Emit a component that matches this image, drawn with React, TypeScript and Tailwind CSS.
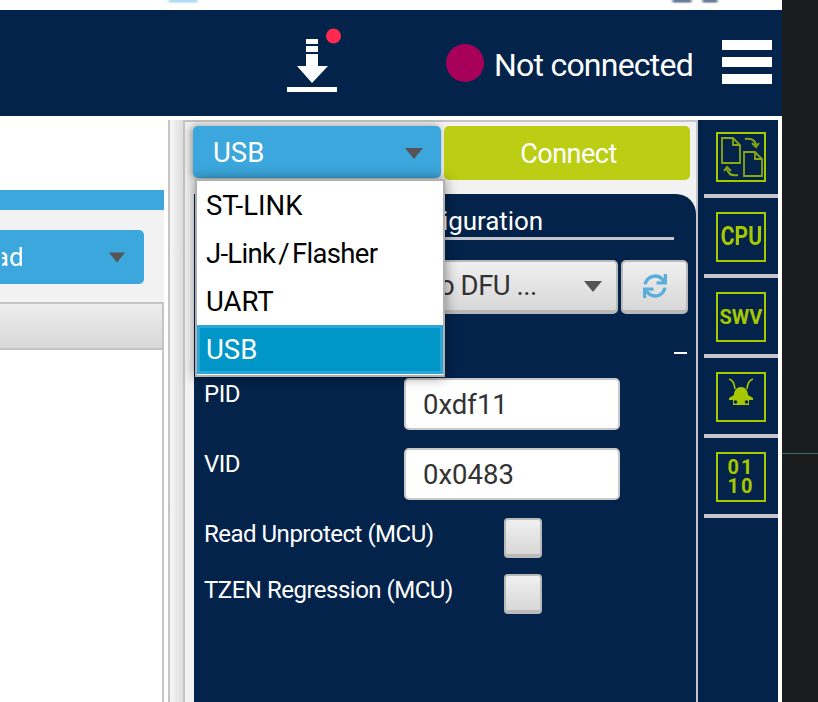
import { FaSync } from 'react-icons/fa'

const font = { fontFamily: 'Roboto, sans-serif' }

function Caret({ className }: { className: string }) {
  return (
    <svg viewBox="0 0 18 11" className={className}>
      <path d="M0 0h18L9 11z" fill="#555" />
    </svg>
  )
}

function IconBox({ children }: { children: React.ReactNode }) {
  return (
    <div className="mb-3 ml-[18px] flex h-[50px] w-[50px] items-center justify-center border-[2px] border-[#a6c800] text-[#a6c800]">
      {children}
    </div>
  )
}

function Separator() {
  return <div className="mb-[14px] ml-[6px] h-1 bg-[#c4c6cc]" />
}

function SideBar() {
  return (
    <div className="w-[82px] shrink-0 border-l-2 border-[#c4c6cc] bg-[#03234b] pt-3">
      <IconBox>
        <svg viewBox="0 0 46 46" className="h-[46px] w-[46px]" fill="none" stroke="#8aa810" strokeWidth="1.8">
          <path d="M4 4h11l7 7v18H4z" />
          <path d="M15 4v7h7" />
          <path d="M26 18h11l7 7v17H26z" />
          <path d="M37 18v7h7" />
          <path d="M27 5c6-1 10 1 11 6" strokeWidth="2" />
          <path d="M34 9l4 4 3-4" strokeWidth="2" />
          <path d="M20 41c-6 1-10-1-11-6" strokeWidth="2" />
          <path d="M13 37l-4-4-3 4" strokeWidth="2" />
        </svg>
      </IconBox>
      <Separator />
      <IconBox>
        <span className="scale-x-[0.85] text-[25px] font-bold" style={font}>CPU</span>
      </IconBox>
      <Separator />
      <IconBox>
        <span className="text-[20px] font-bold" style={font}>SWV</span>
      </IconBox>
      <Separator />
      <IconBox>
        <svg viewBox="0 0 46 46" className="h-[46px] w-[46px]" fill="none">
          <path d="M17 15c-.5-5-2-9-6-10M29 15c.5-5 2-9 6-10" stroke="#a6c800" strokeWidth="1.6" />
          <path d="M16 21c0-5 3-8 7-8s7 3 7 8l5 3v2h-4v5H15v-5h-4v-2z" fill="#a6c800" />
          <circle cx="17.5" cy="28" r="1.8" fill="#03234b" />
          <circle cx="28.5" cy="28" r="1.8" fill="#03234b" />
        </svg>
      </IconBox>
      <Separator />
      <IconBox>
        <span className="text-center text-[20px] leading-[19px] font-bold tracking-[2px]" style={font}>
          01
          <br />
          10
        </span>
      </IconBox>
      <Separator />
    </div>
  )
}

function PortMenu() {
  return (
    <div className="absolute top-[57px] left-[10px] z-10 w-[250px] border-2 border-[#b0b0b0] bg-white pb-[1px] text-[27.5px] text-black shadow-[0_0_12px_rgba(0,0,0,0.45)]">
      <div className="flex h-12 items-center pt-[2px] pl-[9px]">ST-LINK</div>
      <div className="flex h-12 items-center pt-[2px] pl-[9px] tracking-[-0.7px] [word-spacing:-3px]">J-Link / Flasher</div>
      <div className="flex h-12 items-center pt-[2px] pl-[9px]">UART</div>
      <div className="flex h-[49px] items-center border-[3px] border-[#2ba6d8] bg-[#0096c8] pl-[6px] text-white">USB</div>
    </div>
  )
}

function Field({ label, value }: { label: string; value: string }) {
  return (
    <div className="mb-[18px] flex h-[52px] pl-[10px]">
      <div className="w-[200px] pt-[1px] text-[24px] leading-[30px] tracking-[-0.5px] text-white">{label}</div>
      <div className="flex w-[216px] items-center rounded-[5px] border-2 border-[#c8c8c8] bg-white pt-[2px] pl-[17px] text-[27.5px] text-[#333]">
        {value}
      </div>
    </div>
  )
}

function Check({ label, className }: { label: string; className: string }) {
  return (
    <div className={`flex h-10 pl-[10px] ${className}`}>
      <div className="w-[300px] text-[24px] leading-[32px] tracking-[-0.5px] whitespace-nowrap text-white">{label}</div>
      <div className="h-10 w-[38px] rounded-[4px] border-2 border-b-[4px] border-[#b9b9b9] bg-gradient-to-b from-[#f0f0f0] to-[#d8d8d8]" />
    </div>
  )
}

function RightPanel() {
  return (
    <div className="relative w-[511px] shrink-0 border-t-2 border-[#c4c4c4] bg-[#f2f2f2]">
      <div className="flex pt-1 pl-2">
        <div className="flex h-[52px] w-[248px] items-center justify-between rounded-[5px] bg-[#3ba7dc] pt-[2px] pr-[18px] pl-5 text-[27.5px] text-white shadow-[-2px_0_8px_rgba(0,0,0,0.4)]">
          USB
          <Caret className="h-[11px] w-[18px]" />
        </div>
        <div className="ml-[3px] flex h-[54px] w-[246px] items-center justify-center rounded-[5px] bg-[#bbce14] pt-[2px] pl-[3px] text-[27px] tracking-[-0.5px] text-white">
          Connect
        </div>
      </div>
      <PortMenu />
      <div className="mt-[14px] ml-[9px] h-[510px] rounded-tr-[20px] bg-[#03234b]">
        <div className="mx-[11px] mr-[22px] flex h-[46px] items-end justify-center border-b-[3px] border-[#c4c6cc] pb-[1px] text-[26px] leading-[30px] tracking-[-0.1px] text-white">
          USB configuration
        </div>
        <div className="mt-5 ml-[11px] flex">
          <div className="flex h-[54px] w-[413px] items-center justify-between rounded-[5px] border-2 border-b-[4px] border-[#b9b9b9] bg-gradient-to-b from-[#f0f0f0] to-[#d8d8d8] pr-[14px] pl-[18px] text-[27.5px] text-[#333]">
            <span className="ml-[195px] tracking-[-0.5px]">No DFU ...</span>
            <Caret className="h-[11px] w-[18px]" />
          </div>
          <div className="ml-[3px] flex h-[54px] w-[67px] items-center justify-center rounded-[5px] border-2 border-b-[4px] border-[#b9b9b9] bg-gradient-to-b from-[#f0f0f0] to-[#d8d8d8]">
            <FaSync className="h-6 w-6 text-[#5aaedc]" />
          </div>
        </div>
        <div className="flex h-[64px] justify-end pt-[38px] pr-[9px]">
          <div className="h-[2px] w-[13px] bg-white" />
        </div>
        <Field label="PID" value="0xdf11" />
        <Field label="VID" value="0x0483" />
        <Check label="Read Unprotect (MCU)" className="" />
        <Check label="TZEN Regression (MCU)" className="mt-4" />
      </div>
    </div>
  )
}

function LeftPanel() {
  return (
    <div className="flex w-[164px] shrink-0 flex-col">
      <div className="h-[70px]" />
      <div className="h-5 bg-[#3ba7dc]" />
      <div className="bg-[#f2f2f2] pt-5 pr-5">
        <div className="flex h-[54px] items-center justify-end rounded-r-[5px] bg-[#3ba7dc] pr-[19px] text-[26px] text-white">
          <div className="mr-[87px] w-[20px] overflow-hidden">
            <div className="ml-[-37px] w-[60px]">Read</div>
          </div>
          <Caret className="h-[11px] w-[16px]" />
        </div>
        <div className="h-[18px]" />
      </div>
      <div className="h-12 border-y-2 border-r-2 border-[#c4c4c4] bg-gradient-to-b from-[#eeeeee] to-[#d8d8d8]" />
      <div className="flex-1 border-r-2 border-[#c4c4c4] bg-white" />
    </div>
  )
}

function Header() {
  return (
    <div className="flex h-[106px] items-center bg-[#03234b] pl-[287px] text-white">
      <svg viewBox="0 0 55 60" className="mt-3 h-[60px] w-[55px] shrink-0 overflow-visible" fill="white">
        <rect x="19" y="0" width="12" height="5" />
        <rect x="19" y="7" width="12" height="6" />
        <path d="M19 15h12v12h10L25 44 10 27h9z" />
        <rect x="0" y="48" width="50" height="5" />
        <circle cx="46.5" cy="-3" r="7.5" fill="#ff2a4d" />
      </svg>
      <div className="ml-[104px] h-[38px] w-[38px] shrink-0 rounded-full bg-[#a6005a]" />
      <div className="mt-[3px] ml-[10px] w-[199px] text-[32px] leading-none tracking-[-0.77px] whitespace-nowrap">Not connected</div>
      <div className="mb-[2px] ml-[29px] flex w-[50px] flex-col gap-[7px]">
        <div className="h-[10px] bg-white" />
        <div className="h-[10px] bg-white" />
        <div className="h-[10px] bg-white" />
      </div>
    </div>
  )
}

export default function App() {
  return (
    <div className="flex h-[702px] w-[818px] overflow-hidden bg-[#1b1c1e]" style={font}>
      <div className="flex w-[782px] shrink-0 flex-col bg-white">
        <div className="flex h-[10px] items-start">
          <div className="ml-[168px] h-[2px] w-[30px] rounded-b-full bg-[#7cc4e8] blur-[1px]" />
          <div className="ml-[474px] h-[2px] w-[20px] rounded-b-full bg-[#03234b] blur-[1px]" />
          <div className="ml-[10px] h-[2px] w-[16px] rounded-b-full bg-[#03234b] blur-[1px]" />
        </div>
        <Header />
        <div className="h-1" />
        <div className="flex flex-1 overflow-hidden">
          <LeftPanel />
          <div className="ml-1 w-[17px] shrink-0 border-x-2 border-[#c4c4c4] bg-gradient-to-r from-[#f6f6f6] to-[#dddddd]" />
          <RightPanel />
          <SideBar />
        </div>
      </div>
      <div className="mt-[453px] h-[1px] flex-1 bg-[#3a7070]" />
    </div>
  )
}
